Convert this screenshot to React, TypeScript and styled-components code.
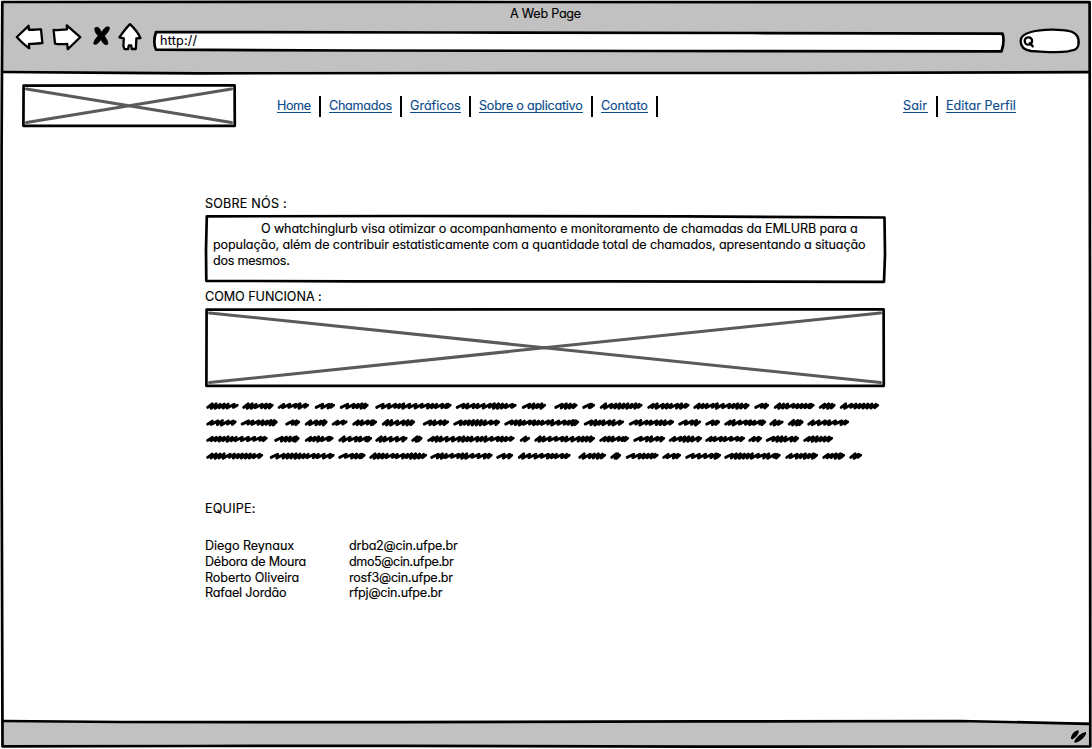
import React from "react";
import styled, { createGlobalStyle } from "styled-components";

const Global = createGlobalStyle`
  body { margin: 0; background: #fff; overflow: hidden; }
  * { box-sizing: border-box; }
`;

const Frame = styled.div`
  position: relative;
  width: 1092px;
  height: 749px;
  display: flex;
  flex-direction: column;
  padding: 2px 2px 3px 3px;
  background: #fff;
  color: #000;
  font: 400 12.6px/18px Inter, "Liberation Sans", sans-serif;
  font-feature-settings: "cv11";
  -webkit-text-stroke: 0.15px currentColor;
`;

const Overlay = styled.svg`
  position: absolute;
  inset: 0;
  width: 100%;
  height: 100%;
  overflow: visible;
  pointer-events: none;
  fill: none;
  stroke: #000;
  stroke-width: 2.7;
  stroke-linejoin: round;
  stroke-linecap: round;
`;

const Art = styled.svg`
  display: block;
  flex: none;
  overflow: visible;
  fill: #fff;
  stroke: #000;
  stroke-width: 2.3;
  stroke-linejoin: round;
  stroke-linecap: round;
`;

const ScribbledWord = styled.path`
  fill: none;
  stroke-width: 2.9;
`;

const BrowserBar = styled.header`
  flex: none;
  height: 71px;
  background: #c1c1c1;
  padding-top: 3px;
`;

const Title = styled.div`
  text-align: center;
  height: 16px;
  padding-right: 2px;
`;

const Toolbar = styled.div`
  display: flex;
  align-items: flex-start;
  padding: 2px 0 0 12px;
`;

const Address = styled.div`
  position: relative;
  width: 852px;
  height: 22px;
  margin: 7px 14px 0 12px;
  padding: 2px 0 0 7px;
`;

const AddressText = styled.span`
  position: relative;
`;

const SearchBox = styled.div`
  padding-top: 5px;
`;

const Text = styled.span<{ $track?: number }>`
  letter-spacing: ${(p) => p.$track ?? 0.2}px;
  white-space: pre;
`;

const Page = styled.main`
  flex: 1;
  padding: 11px 0 0 19px;
`;

const TopRow = styled.div`
  display: flex;
  align-items: flex-start;
  height: 111px;
`;

const Placeholder = styled.div<{ $w: number; $h: number }>`
  position: relative;
  flex: none;
  width: ${(p) => p.$w}px;
  height: ${(p) => p.$h}px;
`;

const Nav = styled.nav<{ $left: number }>`
  display: flex;
  gap: 8px;
  margin: 12px 0 0 ${(p) => p.$left}px;
`;

const NavLink = styled.a<{ $w: number; $track: number }>`
  width: ${(p) => p.$w}px;
  height: 17px;
  padding-top: 2px;
  line-height: 15px;
  color: #0b4c8c;
  white-space: nowrap;
  letter-spacing: ${(p) => p.$track}px;
  border-bottom: 1px solid #0b4c8c;
`;

const Divider = styled.i`
  width: 2px;
  height: 21px;
  background: #000;
`;

const Column = styled.div`
  width: 681px;
  margin-left: 183px;
`;

const Heading = styled.h2`
  margin: 0;
  font: inherit;
  height: 16px;
`;

const AboutBox = styled.div`
  position: relative;
  height: 68px;
  margin: 4px 0 5px;
  padding: 5px 8px 0;
`;

const AboutLine = styled.div<{ $indent?: number }>`
  position: relative;
  height: 16px;
  padding-left: ${(p) => p.$indent ?? 0}px;
`;

const HowItWorks = styled.div`
  margin: 4px 0 13px;
`;

const TeamSection = styled.section`
  padding-top: 38px;
`;

const Team = styled.div`
  display: grid;
  grid-template-columns: 144px 1fr;
  grid-auto-rows: 15.8px;
  margin-top: 21px;
`;

const StatusBar = styled.footer`
  flex: none;
  height: 24px;
  background: #c1c1c1;
  display: flex;
  justify-content: flex-end;
`;

const BackIcon = () => (
  <Art width="37" height="28" viewBox="16 23 37 28">
    <path d="M17.8 37 29.6 25.8 29.8 29.6C33.4 30.2 37.4 29.2 42 29.4L43.4 43C38.4 44 34.4 43.8 30 43.8L30.2 48.2C25.4 45 21.4 41 17.8 37Z" />
  </Art>
);

const ForwardIcon = () => (
  <Art width="40" height="28" viewBox="53 23 40 28">
    <path d="M54.6 29.8C58.5 30.6 63 29.8 68 29.4L67.8 25.4 81.2 37.2 68.8 49.3 68.2 44C64 44 60 44.6 56 43.6Z" />
  </Art>
);

const StopIcon = () => (
  <Art width="26" height="28" viewBox="93 23 26 28">
    <path
      fill="#000"
      strokeWidth="0.8"
      d="M96 28.2C98 26.2 100.4 27.2 102.6 32.6C105.4 27.6 108 25.8 110.4 27.4C110.8 30.4 107.6 33.4 105.4 36C108 39.6 109.4 42 108.6 44.4C106 45.2 104 43.6 102 39.4C98.8 43.8 96.8 45 94.8 44C94.4 41.4 96.8 38.6 99.2 35.8C96.2 32.6 95.4 30.8 96 28.2Z"
    />
  </Art>
);

const HomeIcon = () => (
  <Art width="23" height="28" viewBox="119 23 23 28">
    <path d="M131 24.2C127 28 123.5 33 120.4 37.4L124.8 38.4 124.4 46 125.4 49 129 49.2 129.8 45.4 132.2 45.4 132.8 49 136.8 49 137.4 38.4 141.4 38C139 32.6 135 28 131 24.2Z" />
  </Art>
);

const SearchField = () => (
  <Art width="61" height="26" viewBox="1019 28 61 26">
    <path d="M1031 32C1042 29 1060 28.8 1071 31.5C1077 33.5 1079.5 38 1078.4 45C1077 50.5 1073 50 1068 51.4C1056 53.2 1044 51.6 1031 51C1024 50 1020.6 46.5 1020.6 41C1020.6 36.5 1025 33.5 1031 32Z" />
    <circle cx="1028.4" cy="41" r="3.7" />
    <path d="M1030 43 1032.8 46.4" />
  </Art>
);

const Crossed = ({ w, h }: { w: number; h: number }) => (
  <Placeholder $w={w} $h={h}>
    <Overlay>
      <path stroke="#5a5a5a" strokeWidth="3" d={`M4.5 5 ${w - 4.5} ${h - 4.5}M${w - 4.5} 5 4.5 ${h - 4.5}`} />
      <path d={`M1.6 1.6 ${w / 2} 1.3 ${w - 1.4} 1.4 ${w - 1.2} ${h - 1.2} ${w / 3} ${h - 1.2} 1.4 ${h - 1.2}Z`} />
    </Overlay>
  </Placeholder>
);

const scribbleRows: { y: number; words: [number, number][] }[] = [
  { y: 6, words: [[206.5, 238.5], [242.5, 273.5], [278, 309], [315, 335], [340, 368.5], [375.5, 451.5], [456, 516.5], [522, 546], [554.5, 577.5], [582.5, 595], [600, 642.5], [647.5, 689.5], [693.5, 749.5], [754.5, 769], [774, 814.5], [819, 835.5], [840, 879]] },
  { y: 22.7, words: [[206.5, 236.5], [241, 277.5], [285.5, 300], [305, 327.5], [332, 347.5], [352.5, 377], [382, 415], [423, 449], [453.5, 500], [504.5, 579], [584, 624], [629, 674], [678.5, 701], [705.5, 720], [724.5, 766], [769.5, 783.5], [788, 803.5], [807.5, 849]] },
  { y: 39, words: [[206.5, 267.5], [274.5, 299.5], [305, 333.5], [338.5, 372], [375.5, 407.5], [411.5, 422.5], [427.5, 514.5], [520, 530], [534.5, 595], [599.5, 629], [633.5, 665], [669, 702], [705.5, 745], [748.5, 762], [766, 799], [803.5, 833]] },
  { y: 56, words: [[206.5, 263], [270, 334.5], [338.5, 365.5], [369.5, 427], [430.5, 492.5], [496.5, 513], [518, 570.5], [578.5, 606], [610.5, 621], [626, 658.5], [662.5, 681], [685.5, 721], [724.5, 780.5], [785.5, 818], [822.5, 845], [849.5, 862]] },
];

/* One scribbled word: tight pen loops mixed with wider strokes. */
const scribble = (from: number, to: number, y: number) => {
  let x = from + 1.2;
  let d = `M${x} ${y + 1.4}`;
  let seed = Math.round(from * 7 + y * 3);
  while (x < to - 5) {
    seed = (seed * 73 + 41) % 997;
    const wide = seed % 5 < 2;
    const next = Math.min(x + (wide ? 6.2 : 4), to - 3.6);
    const lift = (seed % 3) * 0.3;
    d += wide
      ? `L${next + 0.3} ${y - 1.8}L${next - 0.6} ${y + 1.4 + lift}`
      : `L${next + 0.5} ${y - 2.2 + lift}L${next - 0.6} ${y + 2.3 - lift}`;
    x = next;
  }
  return `${d}L${to - 1.3} ${y - 0.8}`;
};

const Scribbles = () => (
  <Art width="681" height="62" viewBox="205 0 681 62">
    {scribbleRows.map((row) =>
      row.words.map(([a, b]) => <ScribbledWord key={`${row.y}-${a}`} d={scribble(a, b, row.y)} />)
    )}
  </Art>
);

const mainLinks: [string, number, number][] = [
  ["Home", 34, -0.4],
  ["Chamados", 63, -0.28],
  ["Gráficos", 51, -0.02],
  ["Sobre o aplicativo", 104, -0.24],
  ["Contato", 47, -0.1],
];

const team: { name: string; nameTrack: number; mail: string; mailTrack: number }[] = [
  { name: "Diego Reynaux", nameTrack: -0.06, mail: "drba2@cin.ufpe.br", mailTrack: -0.24 },
  { name: "Débora de Moura", nameTrack: -0.24, mail: "dmo5@cin.ufpe.br", mailTrack: -0.4 },
  { name: "Roberto Oliveira", nameTrack: -0.1, mail: "rosf3@cin.ufpe.br", mailTrack: -0.24 },
  { name: "Rafael Jordão", nameTrack: -0.18, mail: "rfpj@cin.ufpe.br", mailTrack: -0.24 },
];

export default function App() {
  return (
    <Frame>
      <Global />
      <BrowserBar>
        <Title><Text $track={-0.25}>A Web Page</Text></Title>
        <Toolbar>
          <BackIcon />
          <ForwardIcon />
          <StopIcon />
          <HomeIcon />
          <Address>
            <Overlay>
              <path fill="#fff" d="M3 2 300 2.5 600 3 849.5 3.7C851.5 9 850.5 15 848.5 21.4L500 21 200 20.5 3 19.7C1 15 1 8 3 2Z" />
            </Overlay>
            <AddressText><Text>http://</Text></AddressText>
          </Address>
          <SearchBox><SearchField /></SearchBox>
        </Toolbar>
      </BrowserBar>
      <Page>
        <TopRow>
          <Crossed w={214} h={43} />
          <Nav $left={41}>
            {mainLinks.map(([label, w, track]) => (
              <React.Fragment key={label}>
                <NavLink $w={w} $track={track}>{label}</NavLink>
                <Divider />
              </React.Fragment>
            ))}
          </Nav>
          <Nav $left={245}>
            <NavLink $w={25} $track={0.1}>Sair</NavLink>
            <Divider />
            <NavLink $w={70} $track={0.04}>Editar Perfil</NavLink>
          </Nav>
        </TopRow>
        <Column>
          <Heading><Text>SOBRE NÓS :</Text></Heading>
          <AboutBox>
            <Overlay>
              <path d="M1.8 1.3 200 1 480 1.4 679.5 2.5 680 40 679 66.8 400 66.4 150 66.4 1.3 65.8 1 35Z" />
            </Overlay>
            <AboutLine $indent={48}><Text $track={-0.13}>O whatchinglurb visa otimizar o acompanhamento e monitoramento de chamadas da EMLURB para a</Text></AboutLine>
            <AboutLine><Text $track={-0.12}>população, além de contribuir estatisticamente com a quantidade total de chamados, apresentando a situação</Text></AboutLine>
            <AboutLine><Text $track={-0.25}>dos mesmos.</Text></AboutLine>
          </AboutBox>
          <Heading><Text $track={-0.04}>COMO FUNCIONA :</Text></Heading>
          <HowItWorks><Crossed w={680} h={79} /></HowItWorks>
          <Scribbles />
          <TeamSection>
            <Heading><Text>EQUIPE:</Text></Heading>
            <Team>
              {team.map((m) => (
                <React.Fragment key={m.mail}>
                  <Text $track={m.nameTrack}>{m.name}</Text>
                  <Text $track={m.mailTrack}>{m.mail}</Text>
                </React.Fragment>
              ))}
            </Team>
          </TeamSection>
        </Column>
      </Page>
      <StatusBar>
        <Art width="22" height="24" viewBox="1068 722 22 24">
          <path fill="#000" strokeWidth="1.2" d="M1071.4 738.2C1072 735 1074.6 731.6 1078 730.8C1079 732.6 1076 736.4 1072.4 738.8ZM1074.8 741.8C1076 738.6 1080.4 734 1085.4 732.6C1086.4 735 1080.4 740.6 1075.6 742.2Z" />
        </Art>
      </StatusBar>
      <Overlay>
        <path d="M2.3 2 400 1.9 800 2.2 1089.6 2.2 1090 300 1090.3 746.5 700 746.6 400 745.8 200 746 2.5 746.3 1.5 400 1.6 150Z" />
        <path d="M3 72 120 72.8 200 73.3 500 73 800 73 1089 72.2" />
        <path d="M3 721 120 722 400 722.2 700 721.4 960 721 1089 723.8" />
      </Overlay>
    </Frame>
  );
}
